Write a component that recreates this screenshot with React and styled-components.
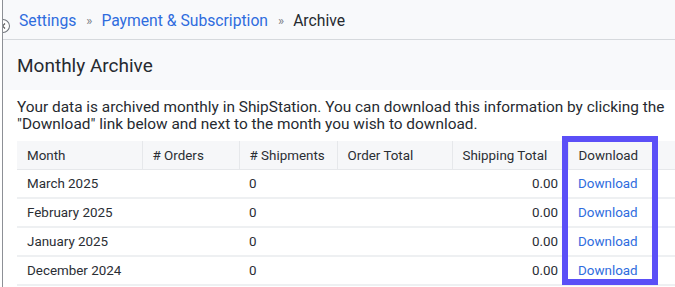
import React from 'react';
import styled, { createGlobalStyle } from 'styled-components';

const rows = [
    { month: 'March 2025', orders: '', shipments: '0', orderTotal: '', shippingTotal: '0.00' },
    { month: 'February 2025', orders: '', shipments: '0', orderTotal: '', shippingTotal: '0.00' },
    { month: 'January 2025', orders: '', shipments: '0', orderTotal: '', shippingTotal: '0.00' },
    { month: 'December 2024', orders: '', shipments: '0', orderTotal: '', shippingTotal: '0.00' },
];

const App = () => {
    return (
        <>
            <Global />
            <PAGE>
                <COLLAPSE>
                    <svg width="8" height="8" viewBox="0 0 8 8">
                        <path d="M5 1.5 L2.5 4 L5 6.5" fill="none" stroke="#555" strokeWidth="1.2" />
                    </svg>
                </COLLAPSE>
                <HEADER>
                    <CRUMBS>
                        <A>Settings</A>
                        <SEP>»</SEP>
                        <A>Payment &amp; Subscription</A>
                        <SEP>»</SEP>
                        <CURRENT>Archive</CURRENT>
                    </CRUMBS>
                    <TITLE>Monthly Archive</TITLE>
                </HEADER>
                <BODY>
                    <P>
                        Your data is archived monthly in ShipStation. You can download this information by clicking the
                        "Download" link below and next to the month you wish to download.
                    </P>
                    <TABLEWRAP>
                        <TABLE>
                            <colgroup>
                                <col style={{ width: 125 }} />
                                <col style={{ width: 97 }} />
                                <col style={{ width: 98 }} />
                                <col style={{ width: 115 }} />
                                <col style={{ width: 116 }} />
                                <col style={{ width: 93 }} />
                                <col />
                            </colgroup>
                            <thead>
                                <tr>
                                    <TH>Month</TH>
                                    <TH># Orders</TH>
                                    <TH># Shipments</TH>
                                    <TH>Order Total</TH>
                                    <TH>Shipping Total</TH>
                                    <TH $last>Download</TH>
                                    <TH $last />
                                </tr>
                            </thead>
                            <tbody>
                                {rows.map((r) => (
                                    <tr key={r.month}>
                                        <TD>{r.month}</TD>
                                        <TD>{r.orders}</TD>
                                        <TD>{r.shipments}</TD>
                                        <TD>{r.orderTotal}</TD>
                                        <TD $right>{r.shippingTotal}</TD>
                                        <TD><LINK>Download</LINK></TD>
                                        <TD />
                                    </tr>
                                ))}
                            </tbody>
                        </TABLE>
                        <HIGHLIGHT />
                    </TABLEWRAP>
                </BODY>
            </PAGE>
        </>
    );
};

export default App;

const Global = createGlobalStyle`
    html, body {
        margin: 0;
        padding: 0;
        background: #fff;
        overflow: hidden;
    }
    body {
        font-family: Roboto, "Liberation Sans", sans-serif;
        color: #262a30;
    }
`;
const PAGE = styled.div`
    position: relative;
    width: 675px;
    height: 287px;
    overflow: hidden;
    border-left: 1px solid #8d9096;
    margin-left: 2px;
    box-sizing: border-box;
`;
const COLLAPSE = styled.div`
    position: absolute;
    left: -8px;
    top: 19px;
    width: 12px;
    height: 12px;
    border: 1px solid #6f737a;
    border-radius: 50%;
    background: #fff;
    display: flex;
    justify-content: flex-end;
    align-items: center;
    padding-right: 1px;
    z-index: 2;
`;
const HEADER = styled.div`
    background: #f8f9fb;
    height: 90px;
`;
const CRUMBS = styled.div`
    height: 40px;
    display: flex;
    align-items: center;
    padding: 1px 0 0 16px;
    box-sizing: border-box;
    font-size: 15.7px;
    border-bottom: 1px solid #d6d9dd;
`;
const A = styled.span`
    color: #2f6cde;
`;
const SEP = styled.span`
    color: #7d8187;
    font-size: 13px;
    margin: 0 9px 0 10px;
`;
const CURRENT = styled.span`
    color: #262a30;
`;
const TITLE = styled.h1`
    margin: 0;
    height: 49px;
    display: flex;
    align-items: center;
    padding: 2px 0 0 14px;
    box-sizing: border-box;
    font-size: 19px;
    font-weight: 400;
    color: #262a30;
`;
const BODY = styled.div`
    padding: 9px 0 0 14px;
`;
const P = styled.p`
    margin: 0 0 8px 0;
    font-size: 15.4px;
    line-height: 17px;
    width: 665px;
    color: #262a30;
`;
const TABLEWRAP = styled.div`
    position: relative;
`;
const TABLE = styled.table`
    border-collapse: collapse;
    table-layout: fixed;
    width: 720px;
    font-size: 13.4px;
`;
const TH = styled.th`
    background: #f6f7f9;
    text-align: left;
    font-weight: 400;
    height: 28px;
    padding: 0 10px;
    border-right: ${(p) => (p.$last ? 'none' : '1px solid #e6e8eb')};
    border-bottom: 1px solid #e6e8eb;
    color: #2a2e34;
    white-space: nowrap;
`;
const TD = styled.td`
    height: 27px;
    padding: 0 10px;
    border-bottom: 2px solid #eef0f2;
    text-align: ${(p) => (p.$right ? 'right' : 'left')};
    color: #2a2e34;
    white-space: nowrap;
`;
const LINK = styled.span`
    color: #2f6cde;
`;
const HIGHLIGHT = styled.div`
    position: absolute;
    left: 545px;
    top: -5px;
    width: 96px;
    height: 149px;
    box-sizing: border-box;
    border: 6px solid #5b4ff7;
    pointer-events: none;
`;
